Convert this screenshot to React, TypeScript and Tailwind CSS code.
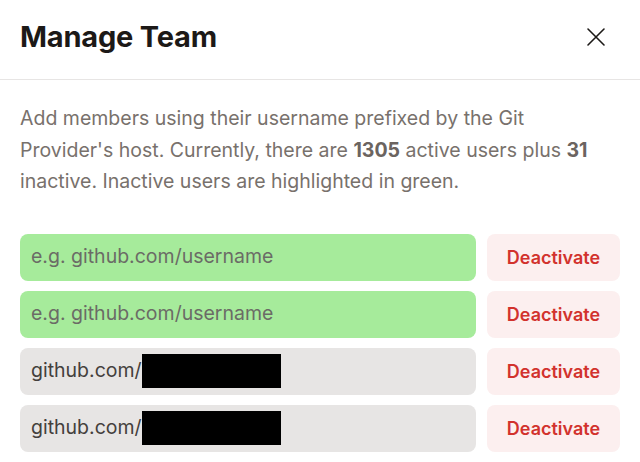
import { useState } from "react";

const rows = [
  { inactive: true, value: "" },
  { inactive: true, value: "" },
  { inactive: false, value: "github.com/" },
  { inactive: false, value: "github.com/" },
];

export default function App() {
  const [open] = useState(true);
  if (!open) return null;

  return (
    <div className="w-[640px] h-[462px] bg-white overflow-hidden font-['Inter',sans-serif]">
      <div className="flex items-center justify-between h-[80px] pl-5 pr-[34px] border-b border-[#e7e5e4]">
        <h1 className="text-[29px] font-bold text-[#1c1917] tracking-[-0.2px] mt-[-5px]">Manage Team</h1>
        <button className="text-[#1c1917] mt-[-5px]">
          <svg width="20" height="20" viewBox="0 0 20 20" fill="none" stroke="currentColor" strokeWidth="1.6" strokeLinecap="round">
            <path d="M2 2L18 18M18 2L2 18" />
          </svg>
        </button>
      </div>

      <div className="px-5 pt-[23px]">
        <p className="text-[19.5px] leading-[31.5px] text-[#78716c] pr-3">
          Add members using their username prefixed by the Git Provider's host. Currently, there are{" "}
          <b className="font-bold text-[#6b6460]">1305</b> active users plus{" "}
          <b className="font-bold text-[#6b6460]">31</b> inactive. Inactive users are highlighted in green.
        </p>

        <div className="mt-[36px] flex flex-col gap-[10px]">
          {rows.map((r, i) => (
            <div key={i} className="flex gap-[11px]">
              <div
                className={
                  "w-[456px] h-[47px] rounded-[8px] flex items-center px-[11px] text-[19.5px] " +
                  (r.inactive ? "bg-[#a6eb9b] text-[#6b6b66]" : "bg-[#e7e5e4] text-[#44403c]")
                }
              >
                {r.inactive ? (
                  <span>e.g. github.com/username</span>
                ) : (
                  <>
                    <span>{r.value}</span>
                    <span className="inline-block w-[139px] h-[34px] bg-black"></span>
                  </>
                )}
              </div>
              <button className="w-[133px] h-[47px] rounded-[8px] bg-[#fcefef] text-[#d2322d] text-[18px] font-semibold">
                Deactivate
              </button>
            </div>
          ))}
        </div>
      </div>
    </div>
  );
}
